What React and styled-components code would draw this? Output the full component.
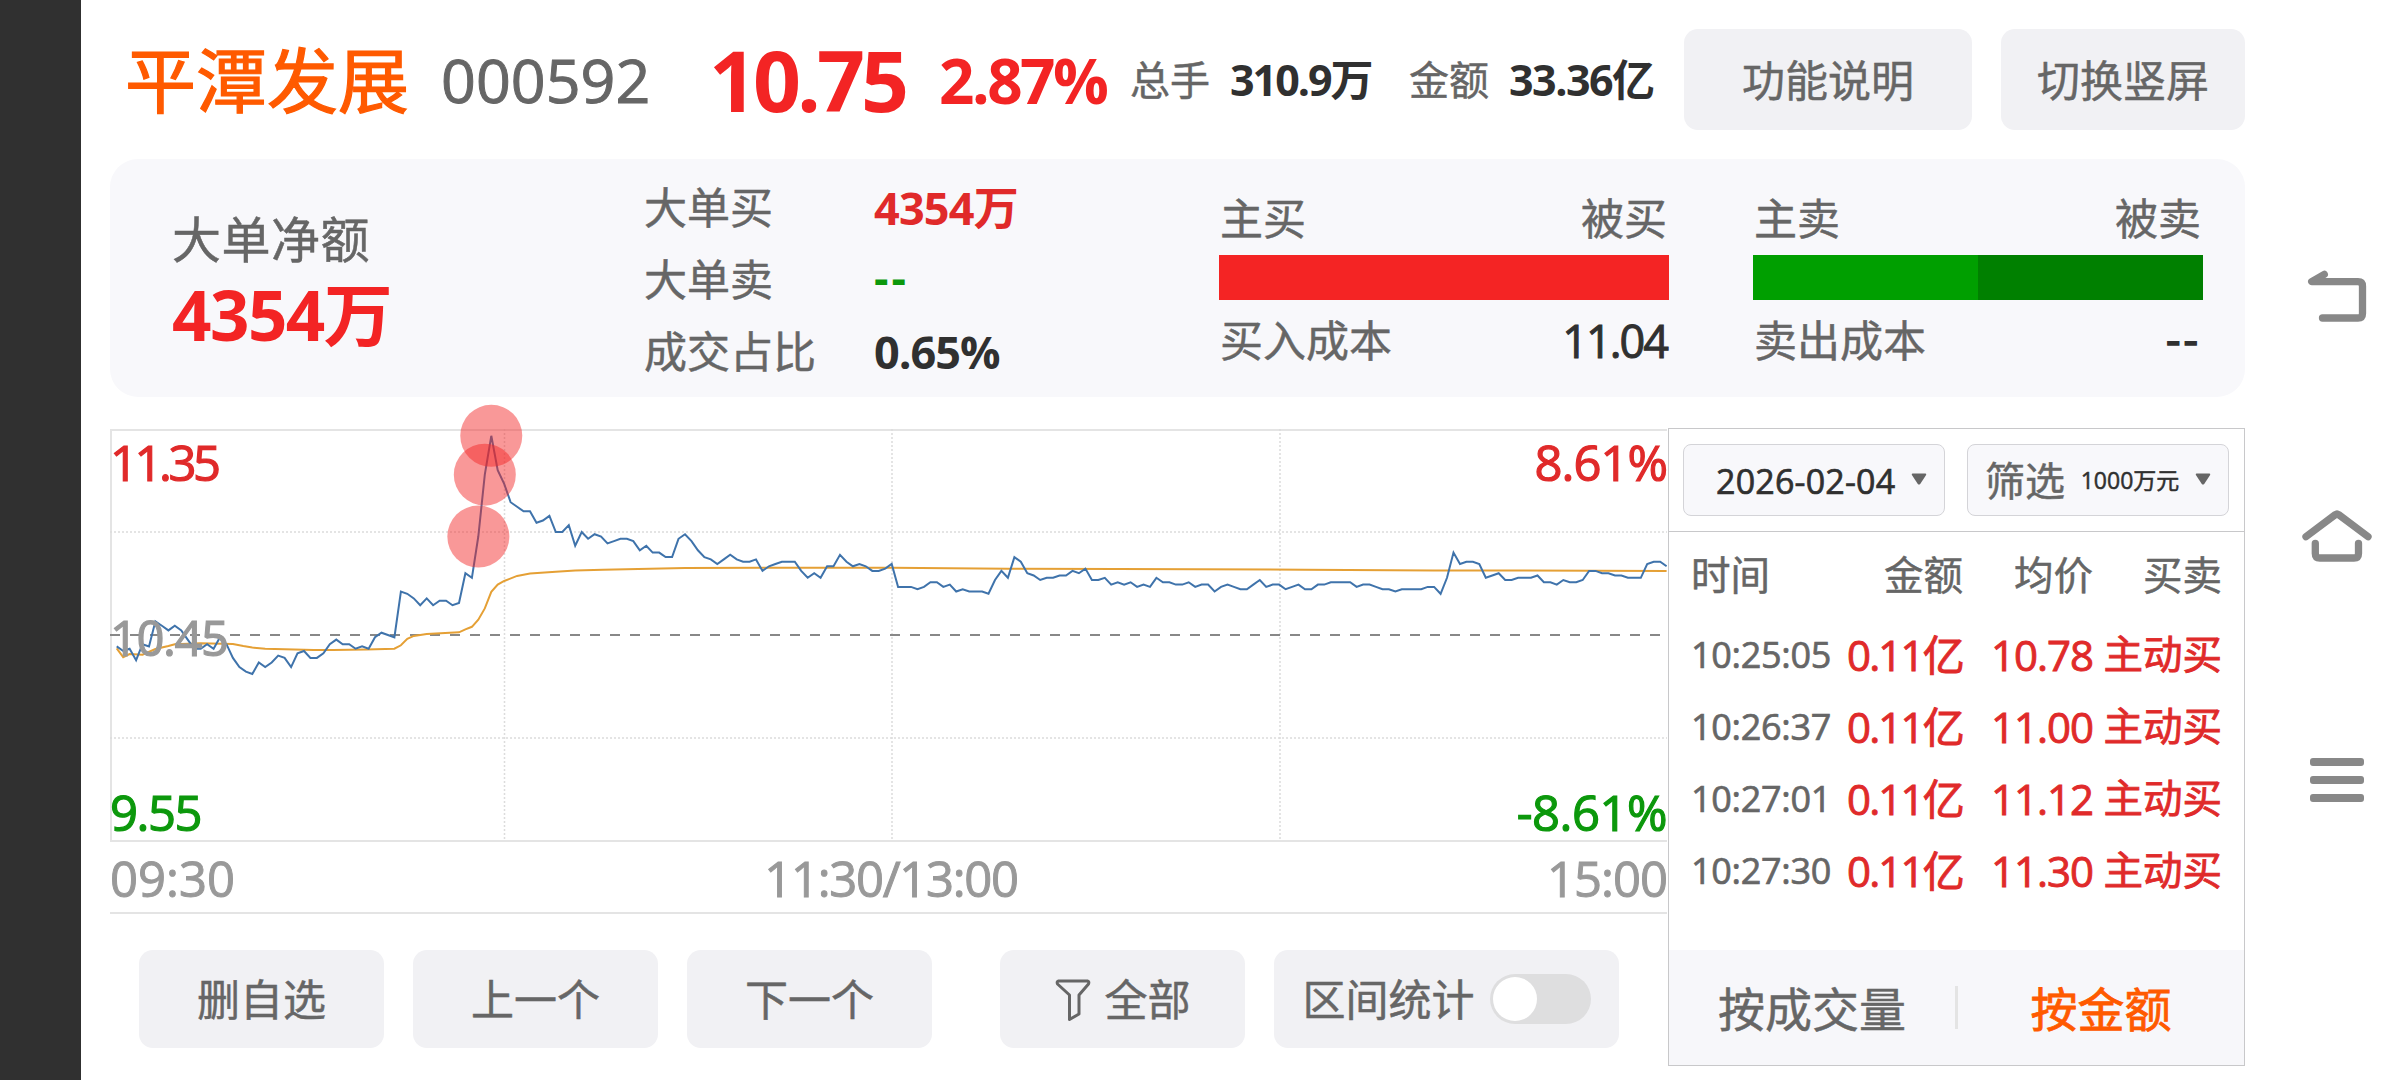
import React from 'react';
import styled, { createGlobalStyle } from 'styled-components';

const GlobalStyle = createGlobalStyle`
  * {
    box-sizing: border-box;
  }

  body {
    background: #ffffff;
    font-family: 'Open Sans', 'Noto Sans CJK SC', sans-serif;
    margin: 0;
  }
`

const colors = {
  orange: '#ff5a00',
  red: '#f32424',
  softRed: '#e02a2a',
  green: '#0c980c',
  dark: '#303030',
  grey: '#666666',
  lightGrey: '#999999',
}

const Screen = styled.div`
  display: flex;
  height: 1080px;
  overflow: hidden;
  width: 2400px;
`

const Notch = styled.div`
  background: #303030;
  flex: none;
  width: 81px;
`

const Main = styled.div`
  display: flex;
  flex: none;
  flex-direction: column;
  margin-left: 29px;
  width: 2135px;
`

const Text = styled.span`
  -webkit-text-stroke: ${props => props.$weight ? 0 : props.$stroke || 0.5}px currentColor;
  color: ${props => props.$color || colors.grey};
  flex: none;
  font-size: ${props => props.$size || 43}px;
  font-weight: ${props => props.$weight || 400};
  letter-spacing: ${props => props.$ls || 0}px;
  line-height: 1;
  margin-left: ${props => props.$ml || 0}px;
  margin-top: ${props => props.$mt || 0}px;
  white-space: nowrap;
`

const Header = styled.header`
  align-items: center;
  display: flex;
  flex: none;
  height: 159px;
  padding: 0 0 0 15px;
`

const HeaderSlot = styled.div`
  align-items: center;
  display: flex;
  flex: none;
  height: 101px;
  width: ${props => props.$width}px;
`

const Button = styled.button`
  align-items: center;
  background: #f1f1f4;
  border: none;
  border-radius: 14px;
  display: flex;
  flex: none;
  font-family: inherit;
  height: ${props => props.$height || 98}px;
  justify-content: center;
  margin-left: ${props => props.$ml || 0}px;
  padding: 1px 0 0;
  width: ${props => props.$width || 245}px;
`

const Summary = styled.section`
  background: #f8f8fb;
  border-radius: 28px;
  display: flex;
  flex: none;
  height: 238px;
`

const NetAmount = styled.div`
  display: flex;
  flex: none;
  flex-direction: column;
  padding: 56px 0 0 62px;
  width: 534px;
`

const Orders = styled.div`
  display: flex;
  flex: none;
  flex-direction: column;
  padding-top: 12px;
  width: 575px;
`

const OrderRow = styled.div`
  align-items: center;
  display: grid;
  grid-template-columns: 230px auto;
  height: 72px;
`

const Cost = styled.div`
  display: flex;
  flex: none;
  flex-direction: column;
  margin-right: 84px;
  padding-top: 29px;
  width: 450px;
`

const CostLine = styled.div`
  align-items: center;
  display: flex;
  height: ${props => props.$height}px;
  justify-content: space-between;
  padding: 0 2px 0 1px;
`

const Bar = styled.div`
  display: flex;
  height: 45px;
  margin-top: 6px;
`

const BarPart = styled.div`
  background: ${props => props.$color};
  flex: 1;
`

const Body = styled.div`
  display: flex;
  flex: 1;
  margin-top: 31px;
`

const ChartColumn = styled.div`
  display: flex;
  flex: none;
  flex-direction: column;
  padding-top: 1px;
  width: 1558px;
`

const ChartArea = styled.div`
  border-bottom: 2px solid #e4e4e4;
  border-left: 2px solid #e4e4e4;
  border-top: 2px solid #e4e4e4;
  height: 413px;
  position: relative;
  width: 1557px;
`

const ChartSvg = styled.svg`
  display: block;
  left: -2px;
  overflow: visible;
  position: absolute;
  top: -2px;
`

const AxisLabel = styled.span`
  -webkit-text-stroke: 1.2px currentColor;
  color: ${props => props.$color};
  font-size: 49px;
  letter-spacing: ${props => props.$ls || 0}px;
  line-height: 50px;
  position: absolute;
  top: ${props => props.$top}px;
  ${props => props.$right ? 'right: 0' : 'left: -2px'};
`

const TimeAxis = styled.div`
  align-items: center;
  border-bottom: 2px solid #e4e4e4;
  display: flex;
  height: 72px;
  justify-content: space-between;
  padding-top: 2px;
  width: 1557px;
`

const Toolbar = styled.div`
  align-items: center;
  display: flex;
  padding: 36px 0 0 29px;
`

const Toggle = styled.div`
  background: #dededf;
  border-radius: 25px;
  height: 50px;
  margin: -2px 0 0 15px;
  padding: 3px;
  width: 101px;
`

const Knob = styled.div`
  background: #ffffff;
  border-radius: 50%;
  height: 44px;
  width: 44px;
`

const Panel = styled.aside`
  border: 1px solid #c8c8ca;
  display: flex;
  flex: none;
  flex-direction: column;
  height: 638px;
  width: 577px;
`

const Filters = styled.div`
  border-bottom: 1px solid #c8c8ca;
  display: flex;
  gap: 22px;
  height: 103px;
  padding: 15px 14px 0;
`

const Select = styled.div`
  align-items: center;
  background: #f8f8fb;
  border: 1px solid #d4d4d8;
  border-radius: 8px;
  display: flex;
  flex: none;
  height: 72px;
  justify-content: space-between;
  padding: 1px 17px 0 ${props => props.$pl}px;
  width: 262px;
`

const Trades = styled.div`
  flex: 1;
  padding: 8px 22px 0 22px;
`

const TradeRow = styled.div`
  align-items: center;
  display: grid;
  grid-template-columns: 139px 133px 130px 129px;
  height: ${props => props.$head ? 79 : 72}px;
  justify-items: end;
  padding-bottom: ${props => props.$head ? 7 : 0}px;

  & > :first-child {
    justify-self: start;
  }
`

const Tabs = styled.div`
  align-items: center;
  background: #f7f7fa;
  display: flex;
  height: 115px;
`

const Tab = styled.div`
  display: flex;
  justify-content: center;
  padding-top: 3px;
  width: 286px;
`

const TabDivider = styled.div`
  background: #e4e4e4;
  height: 43px;
  width: 3px;
`

const NavBar = styled.nav`
  display: flex;
  flex: none;
  flex-direction: column;
  padding: 262px 0 0 57px;
  width: 155px;
`

const NavIcon = styled.svg`
  flex: none;
  margin-bottom: ${props => props.$gap || 0}px;
`

const PREV_CLOSE = 10.45

// price per minute, in cents above or below the previous close
const ticks = [
  -5, -7, -6, -11, -4, -5, 6, 4, 2, 4, 2, -2, -6, -6, -4, -6, -1, -4, -10, -14,
  -16, -17, -12, -14, -12, -9, -10, -14, -8, -7, -10, -10, -8, -4, -2, -4, -4, -6, -5, -6,
  -1, 1, 0, -1, 19, 18, 16, 13, 16, 13, 15, 15, 13, 14, 27, 25, 43, 70, 87, 72,
  66, 58, 56, 54, 54, 49, 50, 52, 45, 45, 48, 39, 45, 42, 44, 43, 40, 41, 42, 42,
  41, 37, 39, 36, 36, 34, 34, 42, 44, 41, 37, 34, 33, 31, 33, 35, 33, 32, 32, 33,
  28, 30, 31, 32, 32, 32, 28, 25, 27, 25, 30, 30, 35, 32, 30, 31, 30, 28, 28, 29,
  31, 21, 21, 21, 20, 21, 23, 23, 21, 22, 19, 20, 19, 19, 19, 18, 24, 28, 25, 34,
  32, 27, 26, 24, 25, 25, 26, 26, 28, 27, 29, 24, 24, 25, 22, 23, 22, 23, 21, 22,
  21, 25, 23, 23, 22, 22, 23, 21, 22, 22, 19, 21, 22, 21, 20, 20, 22, 24, 21, 22,
  22, 20, 21, 22, 20, 20, 22, 22, 23, 23, 23, 23, 21, 22, 22, 21, 20, 20, 19, 20,
  20, 20, 20, 21, 21, 18, 25, 36, 31, 32, 32, 31, 25, 26, 27, 24, 24, 25, 25, 25,
  26, 23, 23, 22, 24, 23, 23, 24, 28, 28, 27, 27, 26, 26, 25, 25, 25, 31, 32, 32,
  30,
]

// average price: [minute, cents from the previous close]
const average = [
  [0, -5.8], [1, -9.7], [2, -8.3], [4, -8.6], [6, -6.1], [8, -4.8], [9, -4], [13, -3.6],
  [18, -3.9], [19.6, -4.8], [21, -5.5], [23, -6], [30.5, -6.5], [33.5, -6.5], [38.7, -6.3],
  [43, -6], [44, -4.5], [45, -1.7], [46, -0.4], [48, 0.4], [53, 1.2], [54, 2.5], [55, 3.6],
  [56, 6.7], [57, 11.6], [58, 18.8], [59, 22], [60, 23.6], [62, 25.8], [64, 26.8],
  [68, 27.6], [71, 28.2], [75.3, 28.5], [88, 29.2], [102, 29.4], [120, 29.4], [138, 28.9],
  [155, 28.8], [184, 28.5], [204, 28.2], [240, 28],
]

const bigOrders = [[56, 43], [57, 70], [58, 87]]

const toX = minute => 6.7 + minute * 6.458
const toY = cents => 206 - cents * 2.29
const toPoints = list => list.map(([m, c]) => `${toX(m).toFixed(1)},${toY(c).toFixed(1)}`).join(' ')

const trades = [
  { time: '10:25:05', amount: '0.11亿', price: '10.78', side: '主动买' },
  { time: '10:26:37', amount: '0.11亿', price: '11.00', side: '主动买' },
  { time: '10:27:01', amount: '0.11亿', price: '11.12', side: '主动买' },
  { time: '10:27:30', amount: '0.11亿', price: '11.30', side: '主动买' },
]

const ArrowSvg = styled.svg`
  flex: none;
  margin-top: -3px;
`

const Arrow = () => (
  <ArrowSvg width="16" height="12" viewBox="0 0 16 12">
    <path d="M1.5 .5h13q1.2 .3 .6 1.5L9.2 11q-1.2 1-2.4 0L.9 2Q.3 .8 1.5 .5z" fill="#666666" />
  </ArrowSvg>
)

const Chart = () => (
  <ChartArea>
    <ChartSvg width="1557" height="413">
      <g stroke="#dcdcdc" strokeWidth="1.5" strokeDasharray="2 2">
        <line x1="0" x2="1557" y1="103" y2="103" />
        <line x1="0" x2="1557" y1="309" y2="309" />
        <line x1="394.5" x2="394.5" y1="0" y2="411" />
        <line x1="782" x2="782" y1="0" y2="411" />
        <line x1="1170" x2="1170" y1="0" y2="411" />
      </g>
      <line x1="0" x2="1557" y1="206" y2="206" stroke="#888888" strokeWidth="2" strokeDasharray="10 10" />
      <polyline points={toPoints(average)} fill="none" stroke="#e5a035" strokeWidth="2" />
      <polyline points={toPoints(ticks.map((c, m) => [m, c]))} fill="none" stroke="#3f73ab" strokeWidth="2" />
      {bigOrders.map(([m, c]) => (
        <circle key={m} cx={toX(m)} cy={toY(c)} r="31" fill="#f22424" fillOpacity="0.47" />
      ))}
    </ChartSvg>
    <AxisLabel $color={colors.softRed} $top={6} $ls={-3.5}>11.35</AxisLabel>
    <AxisLabel $color={colors.lightGrey} $top={181} $ls={-1.5}>{PREV_CLOSE}</AxisLabel>
    <AxisLabel $color={colors.green} $top={356} $ls={-1.5}>9.55</AxisLabel>
    <AxisLabel $color={colors.softRed} $top={6} $ls={-1} $right>8.61%</AxisLabel>
    <AxisLabel $color={colors.green} $top={356} $ls={-0.5} $right>-8.61%</AxisLabel>
  </ChartArea>
)

const App = () => (
  <>
    <GlobalStyle />
    <Screen>
      <Notch />
      <Main>
        <Header>
          <HeaderSlot $width={316}>
            <Text $size={71} $stroke={1.2} $color={colors.orange}>平潭发展</Text>
          </HeaderSlot>
          <HeaderSlot $width={268}>
            <Text $size={61} $stroke={1}>000592</Text>
          </HeaderSlot>
          <HeaderSlot $width={230}>
            <Text $size={84} $weight={700} $color={colors.red} $ls={-4}>10.75</Text>
          </HeaderSlot>
          <HeaderSlot $width={191}>
            <Text $size={62} $weight={700} $color={colors.red} $ls={-2.5}>2.87%</Text>
          </HeaderSlot>
          <HeaderSlot $width={100}>
            <Text $size={40}>总手</Text>
          </HeaderSlot>
          <HeaderSlot $width={179}>
            <Text $size={43} $weight={700} $color={colors.dark} $ls={-2}>310.9万</Text>
          </HeaderSlot>
          <HeaderSlot $width={100}>
            <Text $size={40}>金额</Text>
          </HeaderSlot>
          <HeaderSlot $width={175}>
            <Text $size={43} $weight={700} $color={colors.dark} $ls={-1.5}>33.36亿</Text>
          </HeaderSlot>
          <Button $width={288} $height={101}><Text>功能说明</Text></Button>
          <Button $width={244} $height={101} $ml={29}><Text>切换竖屏</Text></Button>
        </Header>

        <Summary>
          <NetAmount>
            <Text $size={49} $ls={0.5}>大单净额</Text>
            <Text $size={69} $weight={700} $color={colors.red} $mt={16} $ls={-1.5}>4354万</Text>
          </NetAmount>
          <Orders>
            <OrderRow>
              <Text>大单买</Text>
              <Text $size={45} $weight={700} $color={colors.softRed} $ls={-0.8}>4354万</Text>
            </OrderRow>
            <OrderRow>
              <Text>大单卖</Text>
              <Text $size={45} $weight={700} $color={colors.green} $ls={3} $mt={-5}>--</Text>
            </OrderRow>
            <OrderRow>
              <Text>成交占比</Text>
              <Text $size={45} $weight={700} $color={colors.dark} $ls={-1}>0.65%</Text>
            </OrderRow>
          </Orders>
          <Cost>
            <CostLine $height={61}><Text>主买</Text><Text>被买</Text></CostLine>
            <Bar><BarPart $color="#f42424" /></Bar>
            <CostLine $height={81}>
              <Text>买入成本</Text>
              <Text $size={45} $stroke={1} $color={colors.dark} $ls={-2}>11.04</Text>
            </CostLine>
          </Cost>
          <Cost>
            <CostLine $height={61}><Text>主卖</Text><Text>被卖</Text></CostLine>
            <Bar><BarPart $color="#009f00" /><BarPart $color="#008000" /></Bar>
            <CostLine $height={81}>
              <Text>卖出成本</Text>
              <Text $size={45} $stroke={1.5} $color={colors.dark} $ls={3} $mt={-4}>--</Text>
            </CostLine>
          </Cost>
        </Summary>

        <Body>
          <ChartColumn>
            <Chart />
            <TimeAxis>
              <Text $size={49} $stroke={1} $color={colors.lightGrey}>09:30</Text>
              <Text $size={49} $stroke={1} $color={colors.lightGrey} $ls={-1.3}>11:30/13:00</Text>
              <Text $size={49} $stroke={1} $color={colors.lightGrey} $ls={-1}>15:00</Text>
            </TimeAxis>
            <Toolbar>
              <Button><Text>删自选</Text></Button>
              <Button $ml={29}><Text>上一个</Text></Button>
              <Button $ml={29}><Text>下一个</Text></Button>
              <Button $ml={68}>
                <svg width="36" height="42" viewBox="0 0 36 42" fill="none" stroke="#666666" strokeWidth="3" strokeLinejoin="round">
                  <path d="M3.5 2h29q2 .5 1 3L24 16v19l-9.5 5.5V16L2.5 5q-1-2.5 1-3z" />
                </svg>
                <Text $ml={14}>全部</Text>
              </Button>
              <Button $ml={29} $width={345}>
                <Text>区间统计</Text>
                <Toggle><Knob /></Toggle>
              </Button>
            </Toolbar>
          </ChartColumn>

          <Panel>
            <Filters>
              <Select $pl={32}>
                <Text $size={34} $stroke={0.7} $color={colors.dark} $ls={0.2}>2026-02-04</Text>
                <Arrow />
              </Select>
              <Select $pl={17}>
                <Text $size={40}>筛选</Text>
                <Text $size={23} $color={colors.dark}>1000万元</Text>
                <Arrow />
              </Select>
            </Filters>
            <Trades>
              <TradeRow $head>
                <Text $size={39.500}>时间</Text>
                <Text $size={39.500}>金额</Text>
                <Text $size={39.500}>均价</Text>
                <Text $size={39.500}>买卖</Text>
              </TradeRow>
              {trades.map(trade => (
                <TradeRow key={trade.time}>
                  <Text $size={36} $stroke={0.7} $ls={-0.3}>{trade.time}</Text>
                  <Text $size={42} $stroke={0.9} $color={colors.softRed} $ls={-1.8}>{trade.amount}</Text>
                  <Text $size={42} $stroke={0.9} $color={colors.softRed} $ls={-1}>{trade.price}</Text>
                  <Text $size={39.500} $stroke={0.8} $color={colors.softRed}>{trade.side}</Text>
                </TradeRow>
              ))}
            </Trades>
            <Tabs>
              <Tab><Text $size={47}>按成交量</Text></Tab>
              <TabDivider />
              <Tab><Text $size={47} $stroke={0.8} $color={colors.orange}>按金额</Text></Tab>
            </Tabs>
          </Panel>
        </Body>
      </Main>

      <NavBar>
        <NavIcon $gap={168} width="70" height="70" viewBox="0 0 70 70" fill="none" stroke="#888888" strokeWidth="7.3">
          <path d="M22.3 12.3L9.7 19.7H56q4.5 0 4.5 4.5V51.5q0 4.500-4.500 4.500H20.5" strokeLinecap="round" strokeLinejoin="round" />
        </NavIcon>
        <NavIcon $gap={188} width="70" height="70" viewBox="0 0 70 70" fill="none" stroke="#888888" strokeWidth="7.3" strokeLinecap="round" strokeLinejoin="round">
          <path d="M4 36.7L33.5 14.5q1.5-1.2 3 0L66 36.7" />
          <path d="M13.3 43.3V53.5q0 4.5 4.5 4.5H52q4.5 0 4.5-4.500V43.3" />
        </NavIcon>
        <NavIcon width="70" height="44" viewBox="-8 0 70 44" fill="#888888">
          <rect width="54" height="8" rx="3" />
          <rect y="18" width="54" height="8" rx="3" />
          <rect y="36" width="54" height="8" rx="3" />
        </NavIcon>
      </NavBar>
    </Screen>
  </>
)

export default App
